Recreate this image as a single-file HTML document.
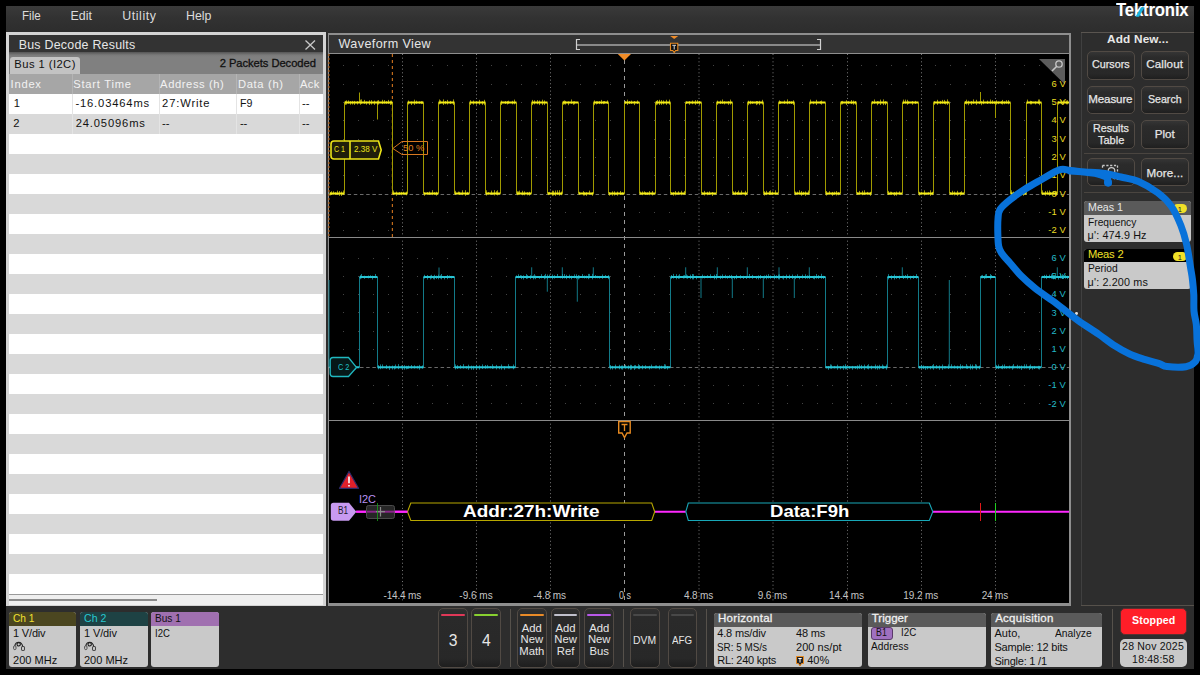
<!DOCTYPE html>
<html><head><meta charset="utf-8"><style>
html,body{margin:0;padding:0;}
body{width:1200px;height:675px;background:#000;position:relative;overflow:hidden;font-family:"Liberation Sans", sans-serif;}
.r{position:absolute;}
.t{position:absolute;white-space:nowrap;}
</style></head><body>
<div class="r" style="left:6px;top:6px;width:1188px;height:663px;background:#2d2d2d;"></div>
<div class="r" style="left:6px;top:6px;width:1188px;height:26px;background:linear-gradient(#3a3a3a,#323232 45%,#2d2d2d);"></div>
<div class="t" style="left:21.60px;top:10.40px;font-size:12.4px;line-height:12.4px;color:#dcdcdc;transform:scaleX(0.937);transform-origin:0 0;">File</div>
<div class="t" style="left:70.60px;top:10.40px;font-size:12.4px;line-height:12.4px;color:#dcdcdc;">Edit</div>
<div class="t" style="left:122.30px;top:10.40px;font-size:12.4px;line-height:12.4px;color:#dcdcdc;letter-spacing:0.55px;">Utility</div>
<div class="t" style="left:186.10px;top:10.40px;font-size:12.4px;line-height:12.4px;color:#dcdcdc;letter-spacing:-0.03px;">Help</div>
<div class="r" style="left:6px;top:32px;width:320px;height:574px;background:#d4d4d4;"></div>
<div class="r" style="left:9px;top:34.5px;width:314px;height:17.5px;background:#333333;"></div>
<div class="t" style="left:18.70px;top:38.70px;font-size:12.4px;line-height:12.4px;color:#e6e6e6;letter-spacing:0.25px;">Bus Decode Results</div>
<svg class="r" style="left:304px;top:39px" width="13" height="12"><path d="M1.5 1.5 L11 10.5 M11 1.5 L1.5 10.5" stroke="#c8c8c8" stroke-width="1.3"/></svg>
<div class="r" style="left:9px;top:52px;width:314px;height:22px;background:linear-gradient(#555,#7a7a7a 3px,#808080 5px,#808080);"></div>
<div class="r" style="left:10px;top:57px;width:70px;height:17px;background:#c3c3c3;border-radius:3px 3px 0 0;"></div>
<div class="t" style="left:14.30px;top:58.72px;font-size:11.2px;line-height:11.2px;color:#111;letter-spacing:0.45px;">Bus 1 (I2C)</div>
<div class="t" style="left:219.70px;top:58.12px;font-size:11.2px;line-height:11.2px;color:#111;letter-spacing:-0.05px;-webkit-text-stroke:0.3px #111;">2 Packets Decoded</div>
<div class="r" style="left:9px;top:74px;width:314px;height:520px;background:#ffffff;"></div>
<div class="r" style="left:9px;top:74px;width:314px;height:20px;background:#a6a6a6;"></div>
<div class="r" style="left:9px;top:114px;width:314px;height:20px;background:#d9d9d9;"></div>
<div class="r" style="left:9px;top:154px;width:314px;height:20px;background:#d9d9d9;"></div>
<div class="r" style="left:9px;top:194px;width:314px;height:20px;background:#d9d9d9;"></div>
<div class="r" style="left:9px;top:234px;width:314px;height:20px;background:#d9d9d9;"></div>
<div class="r" style="left:9px;top:274px;width:314px;height:20px;background:#d9d9d9;"></div>
<div class="r" style="left:9px;top:314px;width:314px;height:20px;background:#d9d9d9;"></div>
<div class="r" style="left:9px;top:354px;width:314px;height:20px;background:#d9d9d9;"></div>
<div class="r" style="left:9px;top:394px;width:314px;height:20px;background:#d9d9d9;"></div>
<div class="r" style="left:9px;top:434px;width:314px;height:20px;background:#d9d9d9;"></div>
<div class="r" style="left:9px;top:474px;width:314px;height:20px;background:#d9d9d9;"></div>
<div class="r" style="left:9px;top:514px;width:314px;height:20px;background:#d9d9d9;"></div>
<div class="r" style="left:9px;top:554px;width:314px;height:20px;background:#d9d9d9;"></div>
<div class="r" style="left:72px;top:74px;width:1px;height:20px;background:#b4b4b4;"></div>
<div class="r" style="left:72px;top:94px;width:1px;height:40px;background:#e4e4e4;"></div>
<div class="r" style="left:159px;top:74px;width:1px;height:20px;background:#b4b4b4;"></div>
<div class="r" style="left:159px;top:94px;width:1px;height:40px;background:#e4e4e4;"></div>
<div class="r" style="left:236px;top:74px;width:1px;height:20px;background:#b4b4b4;"></div>
<div class="r" style="left:236px;top:94px;width:1px;height:40px;background:#e4e4e4;"></div>
<div class="r" style="left:299px;top:74px;width:1px;height:20px;background:#b4b4b4;"></div>
<div class="r" style="left:299px;top:94px;width:1px;height:40px;background:#e4e4e4;"></div>
<div class="t" style="left:10.60px;top:78.52px;font-size:11.2px;line-height:11.2px;color:#f2f2f2;letter-spacing:0.75px;">Index</div>
<div class="t" style="left:73.30px;top:78.52px;font-size:11.2px;line-height:11.2px;color:#f2f2f2;letter-spacing:0.74px;">Start Time</div>
<div class="t" style="left:160.10px;top:78.52px;font-size:11.2px;line-height:11.2px;color:#f2f2f2;letter-spacing:0.59px;">Address (h)</div>
<div class="t" style="left:237.90px;top:78.52px;font-size:11.2px;line-height:11.2px;color:#f2f2f2;letter-spacing:0.67px;">Data (h)</div>
<div class="t" style="left:300.00px;top:78.52px;font-size:11.2px;line-height:11.2px;color:#f2f2f2;letter-spacing:0.4px;">Ack</div>
<div class="t" style="left:13.70px;top:98.22px;font-size:11.2px;line-height:11.2px;color:#111;">1</div>
<div class="t" style="left:75.40px;top:98.22px;font-size:11.2px;line-height:11.2px;color:#111;letter-spacing:0.85px;">-16.03464ms</div>
<div class="t" style="left:162.10px;top:98.22px;font-size:11.2px;line-height:11.2px;color:#111;letter-spacing:0.86px;">27:Write</div>
<div class="t" style="left:239.90px;top:98.22px;font-size:11.2px;line-height:11.2px;color:#111;transform:scaleX(0.950);transform-origin:0 0;">F9</div>
<div class="t" style="left:302.00px;top:98.22px;font-size:11.2px;line-height:11.2px;color:#111;letter-spacing:-0.05px;">--</div>
<div class="t" style="left:13.30px;top:118.22px;font-size:11.2px;line-height:11.2px;color:#111;">2</div>
<div class="t" style="left:75.70px;top:118.22px;font-size:11.2px;line-height:11.2px;color:#111;letter-spacing:0.85px;">24.05096ms</div>
<div class="t" style="left:162.10px;top:118.22px;font-size:11.2px;line-height:11.2px;color:#111;letter-spacing:-0.05px;">--</div>
<div class="t" style="left:239.90px;top:118.22px;font-size:11.2px;line-height:11.2px;color:#111;letter-spacing:-0.05px;">--</div>
<div class="t" style="left:302.00px;top:118.22px;font-size:11.2px;line-height:11.2px;color:#111;letter-spacing:-0.05px;">--</div>
<div class="r" style="left:9px;top:594px;width:314px;height:1px;background:#9a9a9a;"></div>
<div class="r" style="left:9px;top:595px;width:314px;height:9.5px;background:#efefef;"></div>
<div class="r" style="left:9px;top:598.5px;width:148px;height:2.5px;background:#8a8a8a;"></div>
<div class="r" style="left:327.5px;top:33px;width:743.5px;height:572.5px;background:#8e8e8e;"></div>
<div class="r" style="left:329px;top:35px;width:740px;height:18px;background:#333333;"></div>
<div class="t" style="left:338.50px;top:38.43px;font-size:12.6px;line-height:12.6px;color:#e6e6e6;letter-spacing:0.39px;">Waveform View</div>
<div class="r" style="left:329px;top:54px;width:740px;height:549px;background:#000000;"></div>
<svg class="r" style="left:0;top:0" width="1200" height="675"><path d="M343.3 65.9h1 M358.1 65.9h1 M372.9 65.9h1 M387.7 65.9h1 M417.3 65.9h1 M432.1 65.9h1 M446.9 65.9h1 M461.7 65.9h1 M491.3 65.9h1 M506.1 65.9h1 M520.9 65.9h1 M535.7 65.9h1 M565.3 65.9h1 M580.1 65.9h1 M594.9 65.9h1 M609.7 65.9h1 M639.3 65.9h1 M654.1 65.9h1 M668.9 65.9h1 M683.7 65.9h1 M713.3 65.9h1 M728.1 65.9h1 M742.9 65.9h1 M757.7 65.9h1 M787.3 65.9h1 M802.1 65.9h1 M816.9 65.9h1 M831.7 65.9h1 M861.3 65.9h1 M876.1 65.9h1 M890.9 65.9h1 M905.7 65.9h1 M935.3 65.9h1 M950.1 65.9h1 M964.9 65.9h1 M979.7 65.9h1 M1009.3 65.9h1 M1024.1 65.9h1 M1038.9 65.9h1 M1053.7 65.9h1 M343.3 84.2h1 M358.1 84.2h1 M372.9 84.2h1 M387.7 84.2h1 M417.3 84.2h1 M432.1 84.2h1 M446.9 84.2h1 M461.7 84.2h1 M491.3 84.2h1 M506.1 84.2h1 M520.9 84.2h1 M535.7 84.2h1 M565.3 84.2h1 M580.1 84.2h1 M594.9 84.2h1 M609.7 84.2h1 M639.3 84.2h1 M654.1 84.2h1 M668.9 84.2h1 M683.7 84.2h1 M713.3 84.2h1 M728.1 84.2h1 M742.9 84.2h1 M757.7 84.2h1 M787.3 84.2h1 M802.1 84.2h1 M816.9 84.2h1 M831.7 84.2h1 M861.3 84.2h1 M876.1 84.2h1 M890.9 84.2h1 M905.7 84.2h1 M935.3 84.2h1 M950.1 84.2h1 M964.9 84.2h1 M979.7 84.2h1 M1009.3 84.2h1 M1024.1 84.2h1 M1038.9 84.2h1 M1053.7 84.2h1 M343.3 102.5h1 M358.1 102.5h1 M372.9 102.5h1 M387.7 102.5h1 M417.3 102.5h1 M432.1 102.5h1 M446.9 102.5h1 M461.7 102.5h1 M491.3 102.5h1 M506.1 102.5h1 M520.9 102.5h1 M535.7 102.5h1 M565.3 102.5h1 M580.1 102.5h1 M594.9 102.5h1 M609.7 102.5h1 M639.3 102.5h1 M654.1 102.5h1 M668.9 102.5h1 M683.7 102.5h1 M713.3 102.5h1 M728.1 102.5h1 M742.9 102.5h1 M757.7 102.5h1 M787.3 102.5h1 M802.1 102.5h1 M816.9 102.5h1 M831.7 102.5h1 M861.3 102.5h1 M876.1 102.5h1 M890.9 102.5h1 M905.7 102.5h1 M935.3 102.5h1 M950.1 102.5h1 M964.9 102.5h1 M979.7 102.5h1 M1009.3 102.5h1 M1024.1 102.5h1 M1038.9 102.5h1 M1053.7 102.5h1 M343.3 120.8h1 M358.1 120.8h1 M372.9 120.8h1 M387.7 120.8h1 M417.3 120.8h1 M432.1 120.8h1 M446.9 120.8h1 M461.7 120.8h1 M491.3 120.8h1 M506.1 120.8h1 M520.9 120.8h1 M535.7 120.8h1 M565.3 120.8h1 M580.1 120.8h1 M594.9 120.8h1 M609.7 120.8h1 M639.3 120.8h1 M654.1 120.8h1 M668.9 120.8h1 M683.7 120.8h1 M713.3 120.8h1 M728.1 120.8h1 M742.9 120.8h1 M757.7 120.8h1 M787.3 120.8h1 M802.1 120.8h1 M816.9 120.8h1 M831.7 120.8h1 M861.3 120.8h1 M876.1 120.8h1 M890.9 120.8h1 M905.7 120.8h1 M935.3 120.8h1 M950.1 120.8h1 M964.9 120.8h1 M979.7 120.8h1 M1009.3 120.8h1 M1024.1 120.8h1 M1038.9 120.8h1 M1053.7 120.8h1 M343.3 139.1h1 M358.1 139.1h1 M372.9 139.1h1 M387.7 139.1h1 M417.3 139.1h1 M432.1 139.1h1 M446.9 139.1h1 M461.7 139.1h1 M491.3 139.1h1 M506.1 139.1h1 M520.9 139.1h1 M535.7 139.1h1 M565.3 139.1h1 M580.1 139.1h1 M594.9 139.1h1 M609.7 139.1h1 M639.3 139.1h1 M654.1 139.1h1 M668.9 139.1h1 M683.7 139.1h1 M713.3 139.1h1 M728.1 139.1h1 M742.9 139.1h1 M757.7 139.1h1 M787.3 139.1h1 M802.1 139.1h1 M816.9 139.1h1 M831.7 139.1h1 M861.3 139.1h1 M876.1 139.1h1 M890.9 139.1h1 M905.7 139.1h1 M935.3 139.1h1 M950.1 139.1h1 M964.9 139.1h1 M979.7 139.1h1 M1009.3 139.1h1 M1024.1 139.1h1 M1038.9 139.1h1 M1053.7 139.1h1 M343.3 157.4h1 M358.1 157.4h1 M372.9 157.4h1 M387.7 157.4h1 M417.3 157.4h1 M432.1 157.4h1 M446.9 157.4h1 M461.7 157.4h1 M491.3 157.4h1 M506.1 157.4h1 M520.9 157.4h1 M535.7 157.4h1 M565.3 157.4h1 M580.1 157.4h1 M594.9 157.4h1 M609.7 157.4h1 M639.3 157.4h1 M654.1 157.4h1 M668.9 157.4h1 M683.7 157.4h1 M713.3 157.4h1 M728.1 157.4h1 M742.9 157.4h1 M757.7 157.4h1 M787.3 157.4h1 M802.1 157.4h1 M816.9 157.4h1 M831.7 157.4h1 M861.3 157.4h1 M876.1 157.4h1 M890.9 157.4h1 M905.7 157.4h1 M935.3 157.4h1 M950.1 157.4h1 M964.9 157.4h1 M979.7 157.4h1 M1009.3 157.4h1 M1024.1 157.4h1 M1038.9 157.4h1 M1053.7 157.4h1 M343.3 175.7h1 M358.1 175.7h1 M372.9 175.7h1 M387.7 175.7h1 M417.3 175.7h1 M432.1 175.7h1 M446.9 175.7h1 M461.7 175.7h1 M491.3 175.7h1 M506.1 175.7h1 M520.9 175.7h1 M535.7 175.7h1 M565.3 175.7h1 M580.1 175.7h1 M594.9 175.7h1 M609.7 175.7h1 M639.3 175.7h1 M654.1 175.7h1 M668.9 175.7h1 M683.7 175.7h1 M713.3 175.7h1 M728.1 175.7h1 M742.9 175.7h1 M757.7 175.7h1 M787.3 175.7h1 M802.1 175.7h1 M816.9 175.7h1 M831.7 175.7h1 M861.3 175.7h1 M876.1 175.7h1 M890.9 175.7h1 M905.7 175.7h1 M935.3 175.7h1 M950.1 175.7h1 M964.9 175.7h1 M979.7 175.7h1 M1009.3 175.7h1 M1024.1 175.7h1 M1038.9 175.7h1 M1053.7 175.7h1 M343.3 212.3h1 M358.1 212.3h1 M372.9 212.3h1 M387.7 212.3h1 M417.3 212.3h1 M432.1 212.3h1 M446.9 212.3h1 M461.7 212.3h1 M491.3 212.3h1 M506.1 212.3h1 M520.9 212.3h1 M535.7 212.3h1 M565.3 212.3h1 M580.1 212.3h1 M594.9 212.3h1 M609.7 212.3h1 M639.3 212.3h1 M654.1 212.3h1 M668.9 212.3h1 M683.7 212.3h1 M713.3 212.3h1 M728.1 212.3h1 M742.9 212.3h1 M757.7 212.3h1 M787.3 212.3h1 M802.1 212.3h1 M816.9 212.3h1 M831.7 212.3h1 M861.3 212.3h1 M876.1 212.3h1 M890.9 212.3h1 M905.7 212.3h1 M935.3 212.3h1 M950.1 212.3h1 M964.9 212.3h1 M979.7 212.3h1 M1009.3 212.3h1 M1024.1 212.3h1 M1038.9 212.3h1 M1053.7 212.3h1 M343.3 230.6h1 M358.1 230.6h1 M372.9 230.6h1 M387.7 230.6h1 M417.3 230.6h1 M432.1 230.6h1 M446.9 230.6h1 M461.7 230.6h1 M491.3 230.6h1 M506.1 230.6h1 M520.9 230.6h1 M535.7 230.6h1 M565.3 230.6h1 M580.1 230.6h1 M594.9 230.6h1 M609.7 230.6h1 M639.3 230.6h1 M654.1 230.6h1 M668.9 230.6h1 M683.7 230.6h1 M713.3 230.6h1 M728.1 230.6h1 M742.9 230.6h1 M757.7 230.6h1 M787.3 230.6h1 M802.1 230.6h1 M816.9 230.6h1 M831.7 230.6h1 M861.3 230.6h1 M876.1 230.6h1 M890.9 230.6h1 M905.7 230.6h1 M935.3 230.6h1 M950.1 230.6h1 M964.9 230.6h1 M979.7 230.6h1 M1009.3 230.6h1 M1024.1 230.6h1 M1038.9 230.6h1 M1053.7 230.6h1 M343.3 258.3h1 M358.1 258.3h1 M372.9 258.3h1 M387.7 258.3h1 M417.3 258.3h1 M432.1 258.3h1 M446.9 258.3h1 M461.7 258.3h1 M491.3 258.3h1 M506.1 258.3h1 M520.9 258.3h1 M535.7 258.3h1 M565.3 258.3h1 M580.1 258.3h1 M594.9 258.3h1 M609.7 258.3h1 M639.3 258.3h1 M654.1 258.3h1 M668.9 258.3h1 M683.7 258.3h1 M713.3 258.3h1 M728.1 258.3h1 M742.9 258.3h1 M757.7 258.3h1 M787.3 258.3h1 M802.1 258.3h1 M816.9 258.3h1 M831.7 258.3h1 M861.3 258.3h1 M876.1 258.3h1 M890.9 258.3h1 M905.7 258.3h1 M935.3 258.3h1 M950.1 258.3h1 M964.9 258.3h1 M979.7 258.3h1 M1009.3 258.3h1 M1024.1 258.3h1 M1038.9 258.3h1 M1053.7 258.3h1 M343.3 276.5h1 M358.1 276.5h1 M372.9 276.5h1 M387.7 276.5h1 M417.3 276.5h1 M432.1 276.5h1 M446.9 276.5h1 M461.7 276.5h1 M491.3 276.5h1 M506.1 276.5h1 M520.9 276.5h1 M535.7 276.5h1 M565.3 276.5h1 M580.1 276.5h1 M594.9 276.5h1 M609.7 276.5h1 M639.3 276.5h1 M654.1 276.5h1 M668.9 276.5h1 M683.7 276.5h1 M713.3 276.5h1 M728.1 276.5h1 M742.9 276.5h1 M757.7 276.5h1 M787.3 276.5h1 M802.1 276.5h1 M816.9 276.5h1 M831.7 276.5h1 M861.3 276.5h1 M876.1 276.5h1 M890.9 276.5h1 M905.7 276.5h1 M935.3 276.5h1 M950.1 276.5h1 M964.9 276.5h1 M979.7 276.5h1 M1009.3 276.5h1 M1024.1 276.5h1 M1038.9 276.5h1 M1053.7 276.5h1 M343.3 294.7h1 M358.1 294.7h1 M372.9 294.7h1 M387.7 294.7h1 M417.3 294.7h1 M432.1 294.7h1 M446.9 294.7h1 M461.7 294.7h1 M491.3 294.7h1 M506.1 294.7h1 M520.9 294.7h1 M535.7 294.7h1 M565.3 294.7h1 M580.1 294.7h1 M594.9 294.7h1 M609.7 294.7h1 M639.3 294.7h1 M654.1 294.7h1 M668.9 294.7h1 M683.7 294.7h1 M713.3 294.7h1 M728.1 294.7h1 M742.9 294.7h1 M757.7 294.7h1 M787.3 294.7h1 M802.1 294.7h1 M816.9 294.7h1 M831.7 294.7h1 M861.3 294.7h1 M876.1 294.7h1 M890.9 294.7h1 M905.7 294.7h1 M935.3 294.7h1 M950.1 294.7h1 M964.9 294.7h1 M979.7 294.7h1 M1009.3 294.7h1 M1024.1 294.7h1 M1038.9 294.7h1 M1053.7 294.7h1 M343.3 312.9h1 M358.1 312.9h1 M372.9 312.9h1 M387.7 312.9h1 M417.3 312.9h1 M432.1 312.9h1 M446.9 312.9h1 M461.7 312.9h1 M491.3 312.9h1 M506.1 312.9h1 M520.9 312.9h1 M535.7 312.9h1 M565.3 312.9h1 M580.1 312.9h1 M594.9 312.9h1 M609.7 312.9h1 M639.3 312.9h1 M654.1 312.9h1 M668.9 312.9h1 M683.7 312.9h1 M713.3 312.9h1 M728.1 312.9h1 M742.9 312.9h1 M757.7 312.9h1 M787.3 312.9h1 M802.1 312.9h1 M816.9 312.9h1 M831.7 312.9h1 M861.3 312.9h1 M876.1 312.9h1 M890.9 312.9h1 M905.7 312.9h1 M935.3 312.9h1 M950.1 312.9h1 M964.9 312.9h1 M979.7 312.9h1 M1009.3 312.9h1 M1024.1 312.9h1 M1038.9 312.9h1 M1053.7 312.9h1 M343.3 331.1h1 M358.1 331.1h1 M372.9 331.1h1 M387.7 331.1h1 M417.3 331.1h1 M432.1 331.1h1 M446.9 331.1h1 M461.7 331.1h1 M491.3 331.1h1 M506.1 331.1h1 M520.9 331.1h1 M535.7 331.1h1 M565.3 331.1h1 M580.1 331.1h1 M594.9 331.1h1 M609.7 331.1h1 M639.3 331.1h1 M654.1 331.1h1 M668.9 331.1h1 M683.7 331.1h1 M713.3 331.1h1 M728.1 331.1h1 M742.9 331.1h1 M757.7 331.1h1 M787.3 331.1h1 M802.1 331.1h1 M816.9 331.1h1 M831.7 331.1h1 M861.3 331.1h1 M876.1 331.1h1 M890.9 331.1h1 M905.7 331.1h1 M935.3 331.1h1 M950.1 331.1h1 M964.9 331.1h1 M979.7 331.1h1 M1009.3 331.1h1 M1024.1 331.1h1 M1038.9 331.1h1 M1053.7 331.1h1 M343.3 349.3h1 M358.1 349.3h1 M372.9 349.3h1 M387.7 349.3h1 M417.3 349.3h1 M432.1 349.3h1 M446.9 349.3h1 M461.7 349.3h1 M491.3 349.3h1 M506.1 349.3h1 M520.9 349.3h1 M535.7 349.3h1 M565.3 349.3h1 M580.1 349.3h1 M594.9 349.3h1 M609.7 349.3h1 M639.3 349.3h1 M654.1 349.3h1 M668.9 349.3h1 M683.7 349.3h1 M713.3 349.3h1 M728.1 349.3h1 M742.9 349.3h1 M757.7 349.3h1 M787.3 349.3h1 M802.1 349.3h1 M816.9 349.3h1 M831.7 349.3h1 M861.3 349.3h1 M876.1 349.3h1 M890.9 349.3h1 M905.7 349.3h1 M935.3 349.3h1 M950.1 349.3h1 M964.9 349.3h1 M979.7 349.3h1 M1009.3 349.3h1 M1024.1 349.3h1 M1038.9 349.3h1 M1053.7 349.3h1 M343.3 385.7h1 M358.1 385.7h1 M372.9 385.7h1 M387.7 385.7h1 M417.3 385.7h1 M432.1 385.7h1 M446.9 385.7h1 M461.7 385.7h1 M491.3 385.7h1 M506.1 385.7h1 M520.9 385.7h1 M535.7 385.7h1 M565.3 385.7h1 M580.1 385.7h1 M594.9 385.7h1 M609.7 385.7h1 M639.3 385.7h1 M654.1 385.7h1 M668.9 385.7h1 M683.7 385.7h1 M713.3 385.7h1 M728.1 385.7h1 M742.9 385.7h1 M757.7 385.7h1 M787.3 385.7h1 M802.1 385.7h1 M816.9 385.7h1 M831.7 385.7h1 M861.3 385.7h1 M876.1 385.7h1 M890.9 385.7h1 M905.7 385.7h1 M935.3 385.7h1 M950.1 385.7h1 M964.9 385.7h1 M979.7 385.7h1 M1009.3 385.7h1 M1024.1 385.7h1 M1038.9 385.7h1 M1053.7 385.7h1 M343.3 403.9h1 M358.1 403.9h1 M372.9 403.9h1 M387.7 403.9h1 M417.3 403.9h1 M432.1 403.9h1 M446.9 403.9h1 M461.7 403.9h1 M491.3 403.9h1 M506.1 403.9h1 M520.9 403.9h1 M535.7 403.9h1 M565.3 403.9h1 M580.1 403.9h1 M594.9 403.9h1 M609.7 403.9h1 M639.3 403.9h1 M654.1 403.9h1 M668.9 403.9h1 M683.7 403.9h1 M713.3 403.9h1 M728.1 403.9h1 M742.9 403.9h1 M757.7 403.9h1 M787.3 403.9h1 M802.1 403.9h1 M816.9 403.9h1 M831.7 403.9h1 M861.3 403.9h1 M876.1 403.9h1 M890.9 403.9h1 M905.7 403.9h1 M935.3 403.9h1 M950.1 403.9h1 M964.9 403.9h1 M979.7 403.9h1 M1009.3 403.9h1 M1024.1 403.9h1 M1038.9 403.9h1 M1053.7 403.9h1" stroke="#444" stroke-width="1" shape-rendering="crispEdges"/><line x1="402.5" y1="54" x2="402.5" y2="603" stroke="#7a7a7a" stroke-width="1" stroke-dasharray="1 2.66"/><line x1="476.5" y1="54" x2="476.5" y2="603" stroke="#7a7a7a" stroke-width="1" stroke-dasharray="1 2.66"/><line x1="550.5" y1="54" x2="550.5" y2="603" stroke="#7a7a7a" stroke-width="1" stroke-dasharray="1 2.66"/><line x1="699" y1="54" x2="699" y2="603" stroke="#7a7a7a" stroke-width="1" stroke-dasharray="1 2.66"/><line x1="773" y1="54" x2="773" y2="603" stroke="#7a7a7a" stroke-width="1" stroke-dasharray="1 2.66"/><line x1="847.5" y1="54" x2="847.5" y2="603" stroke="#7a7a7a" stroke-width="1" stroke-dasharray="1 2.66"/><line x1="921.5" y1="54" x2="921.5" y2="603" stroke="#7a7a7a" stroke-width="1" stroke-dasharray="1 2.66"/><line x1="995.5" y1="54" x2="995.5" y2="603" stroke="#7a7a7a" stroke-width="1" stroke-dasharray="1 2.66"/><line x1="624.5" y1="60" x2="624.5" y2="603" stroke="#9a9a9a" stroke-width="1" stroke-dasharray="4 4"/><line x1="329" y1="194.5" x2="1069" y2="194.5" stroke="#6a6a6a" stroke-width="1" stroke-dasharray="3.5 2.7"/><line x1="329" y1="367.5" x2="1069" y2="367.5" stroke="#6a6a6a" stroke-width="1" stroke-dasharray="3.5 2.7"/><path d="M329 237.5H1069M329 420.5H1069" stroke="#8a8a8a" stroke-width="1.2"/><line x1="392.4" y1="54" x2="392.4" y2="237" stroke="#c06a1a" stroke-width="1.2" stroke-dasharray="3 3"/><line x1="328.9" y1="54" x2="328.9" y2="237" stroke="#b0601a" stroke-width="1.2" stroke-dasharray="2 2"/><path d="M344.5 102.6V193.4M392.5 102.6V193.4M407.5 102.6V193.4M423.5 102.6V193.4M438.5 102.6V193.4M454.5 102.6V193.4M469.5 102.6V193.4M485.5 102.6V193.4M500.5 102.6V193.4M516.5 102.6V193.4M531.5 102.6V193.4M547.5 102.6V193.4M562.5 102.6V193.4M578.5 102.6V193.4M593.5 102.6V193.4M608.5 102.6V193.4M624.5 102.6V193.4M639.5 102.6V193.4M655.5 102.6V193.4M670.5 102.6V193.4M685.5 102.6V193.4M701.5 102.6V193.4M716.5 102.6V193.4M732.5 102.6V193.4M747.5 102.6V193.4M763.5 102.6V193.4M778.5 102.6V193.4M794.5 102.6V193.4M809.5 102.6V193.4M825.5 102.6V193.4M840.5 102.6V193.4M856.5 102.6V193.4M871.5 102.6V193.4M887.5 102.6V193.4M902.5 102.6V193.4M918.5 102.6V193.4M933.5 102.6V193.4M949.5 102.6V193.4M964.5 102.6V193.4M1010.5 102.6V193.4M1026.5 102.6V193.4M1041.5 102.6V193.4M1057.5 102.6V193.4M359.5 102.5V92.5M377.5 102.5V119.5M980.5 102.5V92M995.5 102.5V118" stroke="#a09a00" stroke-width="1.0" fill="none" /><path d="M330.5 192.1V195.4M331.5 191.2V195.0M333.5 191.3V194.5M335.5 192.2V194.5M337.5 190.6V194.6M339.5 191.0V195.9M341.5 191.5V196.0M343.5 190.5V194.9M345.5 100.9V104.9M346.5 100.3V104.6M348.5 100.4V103.7M350.5 101.1V104.7M352.5 100.9V104.5M354.5 100.9V104.9M357.5 101.1V104.5M360.5 99.7V104.8M361.5 99.4V103.8M364.5 99.9V103.8M366.5 101.5V104.7M369.5 100.3V105.0M371.5 100.1V104.6M374.5 100.6V104.9M377.5 100.6V104.7M378.5 100.1V104.6M382.5 99.8V104.1M384.5 100.1V103.6M386.5 101.2V103.8M388.5 99.9V103.8M390.5 100.7V105.0M391.5 100.6V104.5M393.5 190.5V194.8M396.5 191.6V195.8M399.5 192.1V194.7M401.5 191.9V195.2M403.5 191.8V194.4M406.5 191.6V195.3M408.5 100.5V104.6M411.5 101.5V105.0M414.5 99.7V104.9M416.5 100.7V103.8M419.5 101.5V103.7M421.5 101.2V104.1M422.5 101.6V103.8M424.5 192.3V195.8M427.5 192.1V194.8M429.5 191.6V194.6M432.5 190.2V195.1M434.5 192.2V194.6M436.5 191.8V195.7M439.5 99.5V104.4M440.5 100.4V103.6M443.5 99.4V105.0M445.5 101.0V104.2M447.5 99.9V104.5M450.5 100.9V104.0M453.5 99.4V105.0M455.5 190.8V194.8M458.5 191.6V194.4M459.5 191.8V194.8M462.5 190.3V195.1M465.5 190.2V195.9M467.5 191.9V194.8M470.5 100.2V105.0M473.5 100.5V104.6M476.5 101.4V104.7M479.5 99.9V104.8M482.5 101.2V104.9M484.5 99.8V105.2M486.5 190.3V195.6M488.5 192.1V194.6M491.5 190.6V194.6M494.5 190.2V195.5M496.5 191.2V194.6M497.5 190.3V195.4M501.5 100.6V105.0M505.5 101.1V104.0M507.5 101.1V104.5M508.5 100.7V103.8M512.5 100.8V104.3M514.5 99.6V104.3M517.5 191.2V195.2M518.5 191.4V194.7M519.5 190.6V194.7M522.5 190.8V195.3M524.5 191.3V195.3M527.5 192.2V195.3M529.5 191.8V195.6M532.5 99.9V105.1M534.5 100.3V104.4M537.5 100.1V104.3M539.5 100.5V105.1M542.5 99.7V105.1M544.5 100.4V105.1M548.5 192.1V195.1M549.5 191.9V194.5M552.5 190.7V195.8M553.5 190.8V195.5M555.5 190.5V195.9M557.5 190.3V195.0M559.5 190.2V195.7M561.5 191.5V195.2M563.5 100.9V104.8M564.5 100.4V104.3M565.5 100.9V104.6M568.5 101.5V105.2M571.5 99.5V103.8M573.5 101.5V104.8M574.5 101.3V104.3M579.5 191.8V194.6M583.5 191.1V195.5M584.5 192.3V195.5M586.5 192.2V195.9M589.5 190.6V194.5M592.5 192.3V195.8M594.5 100.4V105.1M596.5 101.3V104.4M597.5 101.4V103.9M599.5 101.2V104.1M601.5 99.9V104.1M603.5 101.2V104.2M604.5 101.0V103.6M607.5 100.4V103.9M609.5 192.2V195.7M612.5 191.3V195.7M614.5 191.3V195.5M617.5 191.6V195.7M620.5 191.0V195.0M622.5 192.3V194.6M625.5 101.0V103.9M627.5 99.7V105.0M629.5 101.0V104.0M631.5 100.6V103.9M634.5 101.0V105.1M637.5 100.4V104.0M640.5 191.6V194.4M642.5 191.4V195.2M644.5 191.3V194.4M645.5 192.2V195.0M647.5 192.4V194.9M649.5 191.1V195.2M652.5 191.0V195.5M656.5 100.9V105.2M657.5 100.0V104.6M659.5 99.8V105.0M661.5 100.0V104.9M663.5 100.4V104.4M666.5 99.8V104.9M669.5 99.6V104.7M671.5 192.3V194.6M673.5 192.2V195.7M675.5 191.0V195.4M678.5 191.3V194.4M681.5 190.8V195.2M684.5 190.9V194.5M686.5 101.4V104.0M689.5 101.1V104.8M692.5 100.5V104.2M695.5 100.1V104.8M697.5 100.2V103.7M699.5 101.0V104.8M702.5 192.4V194.5M704.5 190.9V195.5M707.5 191.8V195.2M709.5 191.4V194.6M712.5 192.0V196.0M717.5 100.6V104.9M720.5 100.6V104.0M722.5 99.5V103.9M724.5 101.3V104.4M728.5 101.3V104.9M730.5 99.6V104.7M733.5 191.3V194.4M735.5 191.3V195.1M737.5 192.1V195.0M738.5 190.6V194.4M741.5 190.6V194.6M745.5 190.8V195.8M748.5 100.7V105.2M750.5 100.8V104.3M752.5 101.5V103.8M756.5 101.0V105.1M757.5 101.0V104.4M759.5 100.8V105.1M762.5 99.8V104.6M764.5 191.2V195.6M766.5 190.8V195.1M769.5 191.0V194.9M770.5 190.4V194.6M772.5 191.6V194.9M775.5 190.3V194.8M779.5 100.4V104.2M780.5 101.2V103.9M784.5 100.5V104.0M787.5 99.4V104.3M789.5 101.2V103.7M791.5 101.4V104.0M793.5 100.3V105.0M795.5 191.5V195.2M797.5 191.7V194.5M799.5 190.3V194.6M801.5 191.0V195.8M803.5 191.8V194.8M805.5 191.4V195.9M808.5 190.5V194.4M810.5 99.6V104.4M813.5 101.6V104.2M816.5 99.8V105.0M820.5 101.1V103.8M821.5 100.5V104.7M826.5 191.0V195.6M829.5 191.2V194.5M832.5 191.9V195.9M834.5 191.7V194.6M836.5 191.0V195.5M838.5 192.2V195.2M841.5 101.1V104.6M842.5 100.9V104.3M846.5 100.2V105.0M848.5 101.1V104.0M851.5 100.0V104.1M853.5 100.5V104.7M855.5 101.0V104.7M857.5 192.3V194.9M859.5 190.9V194.7M862.5 190.8V195.2M864.5 190.3V194.9M867.5 191.9V194.8M870.5 191.8V195.9M872.5 101.1V104.3M874.5 99.5V103.8M877.5 101.1V105.2M878.5 101.5V103.7M880.5 99.6V105.0M883.5 99.4V105.1M885.5 101.2V105.1M888.5 190.9V195.0M890.5 191.7V194.7M891.5 191.8V195.0M894.5 192.1V195.9M896.5 191.6V195.7M899.5 191.4V194.5M903.5 99.6V103.9M905.5 99.6V103.6M907.5 99.8V104.8M908.5 101.5V103.7M912.5 101.0V104.8M915.5 100.9V104.0M919.5 191.8V195.5M921.5 191.8V194.4M924.5 190.4V195.4M928.5 192.3V194.8M930.5 190.3V195.9M932.5 191.8V195.1M934.5 101.2V104.9M937.5 99.8V104.8M940.5 100.9V104.1M942.5 99.9V103.7M944.5 99.9V104.0M945.5 101.5V104.5M947.5 99.4V105.0M950.5 192.2V194.6M952.5 190.8V195.1M954.5 191.5V195.4M957.5 190.8V195.8M960.5 192.1V195.7M961.5 191.2V195.0M965.5 101.1V104.0M966.5 99.7V104.5M968.5 100.7V105.2M971.5 101.1V104.9M973.5 99.4V103.8M976.5 99.8V104.9M979.5 101.5V104.1M981.5 101.2V105.2M983.5 99.6V104.2M987.5 100.6V104.0M990.5 99.5V103.8M992.5 100.2V103.9M994.5 101.3V103.9M996.5 100.3V104.6M998.5 101.6V104.1M1001.5 101.2V104.1M1002.5 99.9V104.5M1004.5 101.4V104.2M1006.5 100.2V103.7M1008.5 100.1V104.3M1011.5 190.3V194.9M1013.5 191.6V195.1M1017.5 190.2V195.0M1018.5 190.8V194.7M1020.5 190.4V195.1M1023.5 191.5V195.8M1025.5 192.0V194.4M1027.5 99.6V103.7M1030.5 100.8V104.4M1031.5 101.0V104.4M1035.5 101.4V104.4M1038.5 99.5V103.9M1039.5 99.5V105.2M1042.5 190.4V195.0M1045.5 191.0V195.7M1047.5 190.7V194.8M1049.5 190.5V195.7M1050.5 191.9V195.0M1053.5 191.6V194.6M1055.5 190.8V195.8M1056.5 191.2V195.6M1058.5 101.3V104.6M1061.5 100.2V104.1M1063.5 100.3V104.3M1066.5 100.6V104.3M1067.5 100.2V104.4" stroke="#d8d010" stroke-width="0.7" fill="none" /><path d="M329.5 193.4H344.5M344.5 102.6H392.5M392.5 193.4H407.5M407.5 102.6H423.5M423.5 193.4H438.5M438.5 102.6H454.5M454.5 193.4H469.5M469.5 102.6H485.5M485.5 193.4H500.5M500.5 102.6H516.5M516.5 193.4H531.5M531.5 102.6H547.5M547.5 193.4H562.5M562.5 102.6H578.5M578.5 193.4H593.5M593.5 102.6H608.5M608.5 193.4H624.5M624.5 102.6H639.5M639.5 193.4H655.5M655.5 102.6H670.5M670.5 193.4H685.5M685.5 102.6H701.5M701.5 193.4H716.5M716.5 102.6H732.5M732.5 193.4H747.5M747.5 102.6H763.5M763.5 193.4H778.5M778.5 102.6H794.5M794.5 193.4H809.5M809.5 102.6H825.5M825.5 193.4H840.5M840.5 102.6H856.5M856.5 193.4H871.5M871.5 102.6H887.5M887.5 193.4H902.5M902.5 102.6H918.5M918.5 193.4H933.5M933.5 102.6H949.5M949.5 193.4H964.5M964.5 102.6H1010.5M1010.5 193.4H1026.5M1026.5 102.6H1041.5M1041.5 193.4H1057.5M1057.5 102.6H1069.5" stroke="#f4ec18" stroke-width="2.0" fill="none" /><path d="M359.5 277.0V367.3M377.5 277.0V367.3M423.5 277.0V367.3M454.5 277.0V367.3M515.5 277.0V367.3M609.5 277.0V367.3M670.5 277.0V367.3M825.5 277.0V367.3M887.5 277.0V367.3M918.5 277.0V367.3M980.5 277.0V367.3M995.5 277.0V367.3M1041.5 277.0V367.3M329 280V367M949.3 366.7V280M439 276.7V267.5M531.7 276.7V267.3M562.3 276.7V267.3M593.3 276.7V267.3M547.3 276.7V291.7M577.3 276.7V301.7M685.7 276.7V267.3M717.3 276.7V267.3M747.3 276.7V267.3M779 276.7V267.3M809.3 276.7V267.3M902.3 276.7V267.3M1057.3 276.7V267.3M701 276.7V298M732.3 276.7V298M763.3 276.7V298M794.3 276.7V298" stroke="#127a88" stroke-width="1.0" fill="none" /><path d="M330.5 364.6V369.0M332.5 365.3V368.5M333.5 365.4V368.4M336.5 365.2V368.4M338.5 366.1V369.5M341.5 365.2V368.4M344.5 365.5V369.8M345.5 364.4V369.9M348.5 364.5V368.6M352.5 365.2V369.8M355.5 365.9V369.6M360.5 275.2V279.2M361.5 274.0V278.4M364.5 275.7V278.8M368.5 275.5V278.4M370.5 275.3V278.1M372.5 275.6V279.5M375.5 274.0V278.3M378.5 365.1V369.3M380.5 364.4V369.2M382.5 364.4V368.5M386.5 364.9V368.9M389.5 365.7V369.9M392.5 365.5V369.5M394.5 365.9V369.5M395.5 364.5V368.7M398.5 364.1V369.2M401.5 365.6V368.3M402.5 366.0V369.3M404.5 365.2V369.7M406.5 365.8V369.3M407.5 366.3V368.9M408.5 365.5V368.7M411.5 365.0V368.6M414.5 365.3V368.5M417.5 365.8V368.5M419.5 364.9V369.7M422.5 365.4V368.7M424.5 274.8V278.6M427.5 275.0V279.5M430.5 275.5V279.4M431.5 274.8V278.6M433.5 275.9V279.2M434.5 274.8V279.5M436.5 275.6V279.0M438.5 274.6V279.3M440.5 275.3V278.5M441.5 274.0V279.3M444.5 276.0V279.4M447.5 275.0V279.2M449.5 275.5V278.2M451.5 275.9V278.5M455.5 364.4V369.4M457.5 365.1V369.0M460.5 365.1V368.7M463.5 364.2V368.6M466.5 366.3V368.7M468.5 364.7V369.8M471.5 365.6V369.7M473.5 365.8V369.8M476.5 364.8V369.4M479.5 365.3V369.6M482.5 364.4V369.0M485.5 365.0V368.8M487.5 364.9V368.4M490.5 366.0V368.3M492.5 364.3V368.9M493.5 366.2V368.4M496.5 364.9V369.4M499.5 366.2V369.2M501.5 364.5V369.6M504.5 366.2V369.7M508.5 364.2V368.5M509.5 366.1V368.4M513.5 364.5V369.3M516.5 275.4V278.2M518.5 274.3V278.3M520.5 275.1V278.0M521.5 275.4V279.1M523.5 275.3V279.5M526.5 274.1V279.0M527.5 275.1V278.7M530.5 275.2V279.1M533.5 275.5V279.4M534.5 274.2V278.3M535.5 275.6V279.2M539.5 276.0V278.8M541.5 274.2V278.3M544.5 275.2V279.3M545.5 273.9V278.5M547.5 274.5V278.8M549.5 274.6V278.1M552.5 274.5V279.3M554.5 275.2V278.6M557.5 274.0V278.1M560.5 275.9V278.3M562.5 274.0V278.8M564.5 274.1V278.4M566.5 274.8V279.2M569.5 274.6V278.6M571.5 275.7V279.3M574.5 274.4V278.3M576.5 274.3V278.9M578.5 275.0V279.4M579.5 275.6V278.5M582.5 274.1V278.2M584.5 275.5V278.5M586.5 275.6V278.5M588.5 273.9V279.2M589.5 273.9V278.2M592.5 273.8V279.3M595.5 275.0V278.3M597.5 275.8V278.3M599.5 275.9V278.6M602.5 274.5V278.8M605.5 275.0V278.2M608.5 275.1V279.2M610.5 365.0V369.5M612.5 365.8V369.5M615.5 364.6V369.4M619.5 364.8V369.3M621.5 365.6V369.3M622.5 365.4V369.6M625.5 364.9V368.7M628.5 365.3V369.3M630.5 364.8V369.8M631.5 364.9V369.5M634.5 365.2V369.9M635.5 365.1V368.6M638.5 364.2V369.1M639.5 365.0V369.2M642.5 365.2V369.3M645.5 365.2V369.0M649.5 365.8V369.4M651.5 364.6V368.5M655.5 365.5V368.4M656.5 365.4V368.3M659.5 365.4V369.4M661.5 365.7V368.7M664.5 364.2V369.1M665.5 364.5V368.9M667.5 366.0V369.5M671.5 275.0V278.9M673.5 273.9V278.6M676.5 274.2V279.3M678.5 275.4V278.9M679.5 274.2V278.6M683.5 275.4V278.6M684.5 275.1V278.3M686.5 274.4V278.4M687.5 275.3V278.8M690.5 274.6V279.1M692.5 274.0V279.4M693.5 274.2V279.4M696.5 275.7V279.3M699.5 276.0V278.0M702.5 274.6V278.4M704.5 275.7V278.4M707.5 275.2V278.2M710.5 274.3V278.3M714.5 274.7V279.3M716.5 274.0V279.3M720.5 275.6V279.1M722.5 274.4V278.7M725.5 274.8V278.4M727.5 275.7V278.8M729.5 275.0V278.2M731.5 274.9V278.9M734.5 276.0V279.3M736.5 274.8V279.1M740.5 275.2V278.7M743.5 275.8V279.0M746.5 275.9V279.0M749.5 274.0V278.5M752.5 274.9V278.8M756.5 275.9V279.1M758.5 275.3V279.4M760.5 275.0V278.8M764.5 275.5V278.7M766.5 274.8V279.3M768.5 274.2V278.6M770.5 275.4V278.8M774.5 274.6V279.3M776.5 275.3V278.5M778.5 274.6V279.3M779.5 274.4V279.4M782.5 275.9V278.5M783.5 275.6V279.5M786.5 274.6V279.3M789.5 274.7V279.0M792.5 274.5V279.0M795.5 275.5V279.1M797.5 274.3V278.2M799.5 275.9V279.2M802.5 274.6V278.6M805.5 274.3V278.9M807.5 275.3V278.7M809.5 275.1V279.0M813.5 275.9V278.9M814.5 275.7V279.3M816.5 274.0V278.7M818.5 275.1V278.9M821.5 273.8V278.8M823.5 275.8V279.0M826.5 366.3V368.3M828.5 366.0V369.8M830.5 364.4V368.5M831.5 364.7V368.7M834.5 365.9V368.4M837.5 364.7V369.7M840.5 366.1V369.3M843.5 365.3V369.8M845.5 364.2V369.4M846.5 366.3V369.3M849.5 366.1V368.8M852.5 365.9V369.7M855.5 366.2V368.9M857.5 365.3V369.4M859.5 364.5V368.9M861.5 364.9V369.0M864.5 364.6V369.8M867.5 365.1V368.8M868.5 364.2V369.4M871.5 365.6V369.3M875.5 364.5V369.3M877.5 365.4V369.7M879.5 364.8V369.3M882.5 364.5V368.8M883.5 365.7V369.0M886.5 364.5V369.7M888.5 274.2V279.4M891.5 275.4V279.4M894.5 274.5V279.5M896.5 275.8V278.9M899.5 275.6V279.2M903.5 275.5V279.0M905.5 275.0V278.3M907.5 274.3V279.3M910.5 275.8V279.3M913.5 275.5V278.9M916.5 274.1V278.8M919.5 365.9V368.6M921.5 364.8V368.9M923.5 365.4V369.1M925.5 366.2V369.9M927.5 366.1V369.3M930.5 366.0V369.3M932.5 365.2V368.3M933.5 364.1V369.7M936.5 365.1V368.7M939.5 365.4V369.8M942.5 364.5V369.8M944.5 366.2V368.6M945.5 366.1V368.4M948.5 364.4V369.0M951.5 364.3V368.4M954.5 365.4V368.5M957.5 365.7V369.2M960.5 364.2V369.4M962.5 365.3V368.6M966.5 364.1V368.7M967.5 365.7V368.9M970.5 364.3V369.6M972.5 364.6V369.4M975.5 364.1V368.4M976.5 364.6V369.8M979.5 365.6V369.2M981.5 275.3V278.4M982.5 274.9V278.3M984.5 275.7V279.1M985.5 274.4V278.3M986.5 274.0V278.4M990.5 274.1V279.4M991.5 275.0V278.2M996.5 364.9V369.0M998.5 364.5V369.1M1001.5 366.0V368.7M1002.5 364.7V369.2M1004.5 364.4V368.7M1006.5 366.0V368.7M1009.5 365.6V368.6M1012.5 365.6V369.7M1013.5 364.1V368.4M1017.5 364.8V368.6M1019.5 365.7V368.7M1021.5 365.5V369.9M1024.5 364.3V368.5M1026.5 364.3V368.4M1029.5 365.7V369.9M1030.5 364.5V368.8M1032.5 366.3V369.6M1034.5 365.9V369.0M1038.5 365.8V369.2M1039.5 365.9V369.5M1042.5 275.8V278.1M1044.5 274.9V278.4M1046.5 274.7V279.1M1049.5 274.7V278.3M1051.5 274.4V278.7M1053.5 275.9V279.3M1055.5 274.1V279.4M1058.5 276.0V279.5M1060.5 274.1V278.4M1062.5 274.2V278.6M1063.5 275.2V279.0M1065.5 274.9V278.7M1067.5 275.7V279.1" stroke="#1cb0c0" stroke-width="0.7" fill="none" /><path d="M329.5 367.3H359.5M359.5 277.0H377.5M377.5 367.3H423.5M423.5 277.0H454.5M454.5 367.3H515.5M515.5 277.0H609.5M609.5 367.3H670.5M670.5 277.0H825.5M825.5 367.3H887.5M887.5 277.0H918.5M918.5 367.3H980.5M980.5 277.0H995.5M995.5 367.3H1041.5M1041.5 277.0H1069.5" stroke="#28c4d4" stroke-width="2.0" fill="none" /><path d="M577 45H820" stroke="#a8a8a8" stroke-width="1.6"/><path d="M580 39.5H576.5V49.5H580M817 39.5H820.5V49.5H817" stroke="#d0d0d0" stroke-width="1.2" fill="none"/><path d="M670.2 36H678.2L674.2 39Z" fill="#f08c28"/><path d="M670.5 43.2H677.8V50.5H675.6L674.2 52.5L672.8 50.5H670.5Z" fill="#111" stroke="#e88a20" stroke-width="1.1"/><path d="M672.3 45.3H676M674.2 45.3V49.5" stroke="#d8d8d8" stroke-width="1"/><path d="M356 511.7H407.5M654.7 511.7H685.8M932.8 511.7H1069" stroke="#ff28ff" stroke-width="2"/><path d="M407.5 511.7L410.8 503H651.7L654.7 511.7L651.7 520.5H410.8Z" stroke="#b8a800" stroke-width="1.1" fill="#000"/><path d="M685.8 511.7L688.3 503H929.3L932.8 511.7L929.3 520.5H688.3Z" stroke="#18a8b8" stroke-width="1.1" fill="#000"/><path d="M980.5 503V521" stroke="#e01818" stroke-width="1"/><path d="M995.5 503V521" stroke="#20d020" stroke-width="1"/><path d="M330.8 505.5Q330.8 502.8 333.5 502.8H349L356.3 511.7L349 520.8H333.5Q330.8 520.8 330.8 518Z" fill="#c89af0"/><path d="M356.3 511.7H366.3" stroke="#ff28ff" stroke-width="2"/><rect x="366.5" y="505.5" width="28" height="13" rx="2" fill="#262626" stroke="#4a4a4a" stroke-width="1"/><path d="M367 511.7H394" stroke="#ff28ff" stroke-width="2" opacity="0.45"/><path d="M376 511.7H385M380.5 507V516.5" stroke="#8a8a8a" stroke-width="1.2"/><path d="M377.5 503V521" stroke="#18a018" stroke-width="0.8"/><path d="M394.7 511.7H407.5" stroke="#ff28ff" stroke-width="2"/><path d="M349 471.5L358.5 488.3H339.5Z" fill="#e0202a" stroke="#2a2a6a" stroke-width="1.2" stroke-linejoin="round"/><path d="M349 476.5V483.3M349 485V486.6" stroke="#fff" stroke-width="1.6"/><path d="M618.7 421.5H630.2V433H627L624.5 437.5L622 433H618.7Z" fill="#000" stroke="#e88a20" stroke-width="1.4"/><path d="M621.5 424.5H627.5M624.5 424.5V431" stroke="#e88a20" stroke-width="1.3"/><path d="M617.8 54H631L624.4 60.5Z" fill="#f08c28"/><path d="M1039 59H1065V84.5Z" fill="#5c5c5c"/><circle cx="1059" cy="64" r="3.2" stroke="#c8c8c8" stroke-width="1.3" fill="none"/><path d="M1056.8 66.3L1052 71" stroke="#c8c8c8" stroke-width="1.6"/><path d="M334 141H378.5L381.2 150L378.5 159H334Q331 159 331 156V144Q331 141 334 141Z" fill="#201e0a" stroke="#ece418" stroke-width="1.6"/><path d="M350 141V159" stroke="#ece418" stroke-width="1.6"/><path d="M392.8 148.5L402 141.5H427.5V154.5H402Z" fill="none" stroke="#d87820" stroke-width="1"/><path d="M333 357.5H348.5L356.5 367.4L348.5 376.5H333Q330.2 376.5 330.2 373.5V360.5Q330.2 357.5 333 357.5Z" fill="#061818" stroke="#20b8c0" stroke-width="1.3"/></svg>
<div class="t" style="left:334.25px;top:144.60px;font-size:9.1px;line-height:9.1px;color:#ece418;transform:scaleX(0.777);transform-origin:0 0;">C 1</div>
<div class="t" style="left:353.75px;top:144.60px;font-size:9.1px;line-height:9.1px;color:#ece418;transform:scaleX(0.894);transform-origin:0 0;">2.38 V</div>
<div class="t" style="left:402.50px;top:142.72px;font-size:9.9px;line-height:9.9px;color:#e08020;transform:scaleX(0.941);transform-origin:0 0;">50 %</div>
<div class="t" style="left:337.80px;top:362.80px;font-size:9.1px;line-height:9.1px;color:#20c0c8;transform:scaleX(0.806);transform-origin:0 0;">C 2</div>
<div class="t" style="right:134.0999999999999px;top:76.8px;font-size:9.4px;line-height:13px;color:#e8dc20;letter-spacing:0.1px;">6 V</div>
<div class="t" style="right:134.0999999999999px;top:250.9px;font-size:9.4px;line-height:13px;color:#20b8c8;letter-spacing:0.1px;">6 V</div>
<div class="t" style="right:134.0999999999999px;top:95.1px;font-size:9.4px;line-height:13px;color:#e8dc20;letter-spacing:0.1px;">5 V</div>
<div class="t" style="right:134.0999999999999px;top:269.1px;font-size:9.4px;line-height:13px;color:#20b8c8;letter-spacing:0.1px;">5 V</div>
<div class="t" style="right:134.0999999999999px;top:113.4px;font-size:9.4px;line-height:13px;color:#e8dc20;letter-spacing:0.1px;">4 V</div>
<div class="t" style="right:134.0999999999999px;top:287.3px;font-size:9.4px;line-height:13px;color:#20b8c8;letter-spacing:0.1px;">4 V</div>
<div class="t" style="right:134.0999999999999px;top:131.7px;font-size:9.4px;line-height:13px;color:#e8dc20;letter-spacing:0.1px;">3 V</div>
<div class="t" style="right:134.0999999999999px;top:305.5px;font-size:9.4px;line-height:13px;color:#20b8c8;letter-spacing:0.1px;">3 V</div>
<div class="t" style="right:134.0999999999999px;top:150.0px;font-size:9.4px;line-height:13px;color:#e8dc20;letter-spacing:0.1px;">2 V</div>
<div class="t" style="right:134.0999999999999px;top:323.7px;font-size:9.4px;line-height:13px;color:#20b8c8;letter-spacing:0.1px;">2 V</div>
<div class="t" style="right:134.0999999999999px;top:168.3px;font-size:9.4px;line-height:13px;color:#e8dc20;letter-spacing:0.1px;">1 V</div>
<div class="t" style="right:134.0999999999999px;top:341.9px;font-size:9.4px;line-height:13px;color:#20b8c8;letter-spacing:0.1px;">1 V</div>
<div class="t" style="right:134.0999999999999px;top:186.6px;font-size:9.4px;line-height:13px;color:#e8dc20;letter-spacing:0.1px;">0 V</div>
<div class="t" style="right:134.0999999999999px;top:360.1px;font-size:9.4px;line-height:13px;color:#20b8c8;letter-spacing:0.1px;">0 V</div>
<div class="t" style="right:134.0999999999999px;top:204.9px;font-size:9.4px;line-height:13px;color:#e8dc20;letter-spacing:0.1px;">-1 V</div>
<div class="t" style="right:134.0999999999999px;top:378.3px;font-size:9.4px;line-height:13px;color:#20b8c8;letter-spacing:0.1px;">-1 V</div>
<div class="t" style="right:134.0999999999999px;top:223.2px;font-size:9.4px;line-height:13px;color:#e8dc20;letter-spacing:0.1px;">-2 V</div>
<div class="t" style="right:134.0999999999999px;top:396.5px;font-size:9.4px;line-height:13px;color:#20b8c8;letter-spacing:0.1px;">-2 V</div>
<div class="t" style="left:359.00px;top:494.41px;font-size:10.5px;line-height:10.5px;color:#b890f0;transform:scaleX(1.041);transform-origin:0 0;">I2C</div>
<div class="t" style="left:338.20px;top:506.24px;font-size:10px;line-height:10px;color:#1a1a2a;transform:scaleX(0.824);transform-origin:0 0;">B1</div>
<div class="t" style="left:463.30px;top:503.41px;font-size:17px;line-height:17px;color:#ffffff;transform:scaleX(1.114);transform-origin:0 0;font-weight:bold;">Addr:27h:Write</div>
<div class="t" style="left:769.60px;top:503.41px;font-size:17px;line-height:17px;color:#ffffff;transform:scaleX(1.090);transform-origin:0 0;font-weight:bold;">Data:F9h</div>
<div class="t" style="left:383.50px;top:590.83px;font-size:10px;line-height:10px;color:#c4c4c4;letter-spacing:-0.17px;">-14.4 ms</div>
<div class="t" style="left:459.30px;top:590.83px;font-size:10px;line-height:10px;color:#c4c4c4;letter-spacing:0.01px;">-9.6 ms</div>
<div class="t" style="left:533.30px;top:590.83px;font-size:10px;line-height:10px;color:#c4c4c4;letter-spacing:-0.11px;">-4.8 ms</div>
<div class="t" style="left:618.70px;top:590.83px;font-size:10px;line-height:10px;color:#c4c4c4;transform:scaleX(0.899);transform-origin:0 0;">0 s</div>
<div class="t" style="left:684.00px;top:590.83px;font-size:10px;line-height:10px;color:#c4c4c4;letter-spacing:-0.14px;">4.8 ms</div>
<div class="t" style="left:757.70px;top:590.83px;font-size:10px;line-height:10px;color:#c4c4c4;letter-spacing:-0.08px;">9.6 ms</div>
<div class="t" style="left:829.00px;top:590.83px;font-size:10px;line-height:10px;color:#c4c4c4;letter-spacing:-0.09px;">14.4 ms</div>
<div class="t" style="left:903.30px;top:590.83px;font-size:10px;line-height:10px;color:#c4c4c4;letter-spacing:-0.09px;">19.2 ms</div>
<div class="t" style="left:981.70px;top:590.83px;font-size:10px;line-height:10px;color:#c4c4c4;letter-spacing:-0.16px;">24 ms</div>
<div class="r" style="left:1080.5px;top:32.5px;width:1px;height:573px;background:#404040;"></div>
<div class="r" style="left:1081px;top:32px;width:113px;height:1px;background:#5a5550;"></div>
<div class="r" style="left:1069px;top:33px;width:2.2px;height:572.5px;background:#8e8e8e;"></div>
<div class="r" style="left:1074.8px;top:312.1px;width:2.8px;height:2.8px;border-radius:50%;background:#e0e0e0;"></div>
<div class="t" style="left:1116.2px;top:0.5px;font-size:18.5px;line-height:18.5px;color:#fff;font-weight:bold;transform:scaleX(0.905);transform-origin:0 0;letter-spacing:-0.2px;">Tektronix</div>
<svg class="r" style="left:1130.5px;top:4.6px" width="16" height="14"><path d="M4.5 11.8L8 11.8L13.6 2.2L10.1 2.2Z" fill="#1ab4e0"/></svg>
<div class="t" style="left:1107.00px;top:34.11px;font-size:11.8px;line-height:11.8px;color:#e8e8e8;font-weight:bold;letter-spacing:0.18px;">Add New...</div>
<div class="r" style="left:1087px;top:51px;width:48px;height:28.5px;box-sizing:border-box;border:1px solid #514a44;border-radius:5px;background:linear-gradient(#353535,#2b2b2b 20%,#282828 80%,#1f1f1f);"></div>
<div class="r" style="left:1141px;top:51px;width:48px;height:28.5px;box-sizing:border-box;border:1px solid #514a44;border-radius:5px;background:linear-gradient(#353535,#2b2b2b 20%,#282828 80%,#1f1f1f);"></div>
<div class="r" style="left:1087px;top:86px;width:48px;height:28px;box-sizing:border-box;border:1px solid #514a44;border-radius:5px;background:linear-gradient(#353535,#2b2b2b 20%,#282828 80%,#1f1f1f);"></div>
<div class="r" style="left:1141px;top:86px;width:48px;height:28px;box-sizing:border-box;border:1px solid #514a44;border-radius:5px;background:linear-gradient(#353535,#2b2b2b 20%,#282828 80%,#1f1f1f);"></div>
<div class="r" style="left:1087px;top:120.4px;width:48px;height:28.299999999999983px;box-sizing:border-box;border:1px solid #514a44;border-radius:5px;background:linear-gradient(#353535,#2b2b2b 20%,#282828 80%,#1f1f1f);"></div>
<div class="r" style="left:1141px;top:120.4px;width:48px;height:28.299999999999983px;box-sizing:border-box;border:1px solid #514a44;border-radius:5px;background:linear-gradient(#353535,#2b2b2b 20%,#282828 80%,#1f1f1f);"></div>
<div class="r" style="left:1087px;top:158.4px;width:48px;height:28.099999999999994px;box-sizing:border-box;border:1px solid #514a44;border-radius:5px;background:linear-gradient(#353535,#2b2b2b 20%,#282828 80%,#1f1f1f);"></div>
<div class="r" style="left:1141px;top:158.4px;width:48px;height:28.099999999999994px;box-sizing:border-box;border:1px solid #514a44;border-radius:5px;background:linear-gradient(#353535,#2b2b2b 20%,#282828 80%,#1f1f1f);"></div>
<div class="t" style="left:1091.60px;top:58.48px;font-size:11.6px;line-height:11.6px;color:#e6e6e6;transform:scaleX(0.926);transform-origin:0 0;-webkit-text-stroke:0.25px #e6e6e6;">Cursors</div>
<div class="t" style="left:1146.20px;top:58.48px;font-size:11.6px;line-height:11.6px;color:#e6e6e6;letter-spacing:0.11px;-webkit-text-stroke:0.25px #e6e6e6;">Callout</div>
<div class="t" style="left:1088.30px;top:93.48px;font-size:11.6px;line-height:11.6px;color:#e6e6e6;letter-spacing:-0.14px;-webkit-text-stroke:0.25px #e6e6e6;">Measure</div>
<div class="t" style="left:1147.90px;top:93.48px;font-size:11.6px;line-height:11.6px;color:#e6e6e6;transform:scaleX(0.914);transform-origin:0 0;-webkit-text-stroke:0.25px #e6e6e6;">Search</div>
<div class="t" style="left:1092.50px;top:121.88px;font-size:11.6px;line-height:11.6px;color:#e6e6e6;transform:scaleX(0.925);transform-origin:0 0;-webkit-text-stroke:0.25px #e6e6e6;">Results</div>
<div class="t" style="left:1097.70px;top:133.88px;font-size:11.6px;line-height:11.6px;color:#e6e6e6;transform:scaleX(0.949);transform-origin:0 0;-webkit-text-stroke:0.25px #e6e6e6;">Table</div>
<div class="t" style="left:1154.70px;top:127.88px;font-size:11.6px;line-height:11.6px;color:#e6e6e6;-webkit-text-stroke:0.25px #e6e6e6;">Plot</div>
<div class="t" style="left:1146.50px;top:166.78px;font-size:11.6px;line-height:11.6px;color:#e6e6e6;letter-spacing:0.1px;-webkit-text-stroke:0.25px #e6e6e6;">More...</div>
<div class="r" style="left:1084px;top:153.2px;width:108px;height:1px;background:#4a4540;"></div>
<div class="r" style="left:1084px;top:192px;width:108px;height:1px;background:#4a4540;"></div>
<svg class="r" style="left:1098px;top:160px" width="26" height="24"><path d="M4.5 5.5H19.5M4.5 5.5V9M19.5 5.5V12" stroke="#c8c8c8" stroke-width="1.3" stroke-dasharray="2.2 1.6" fill="none"/><circle cx="13.5" cy="11" r="3.3" stroke="#c8c8c8" stroke-width="1.2" fill="none"/><path d="M15 17.5L17 19M18.5 18L20 19.5" stroke="#c8c8c8" stroke-width="1.2"/></svg>
<div class="r" style="left:1084.2px;top:201.4px;width:107px;height:40.69999999999999px;border-radius:3px;overflow:hidden;background:#c9c9c9;"><div style="position:absolute;left:0;top:0;width:107px;height:13.400000000000006px;background:#5a5a5a;"></div></div>
<div class="r" style="left:1172.6px;top:204.4px;width:14.5px;height:8.2px;border-radius:4.5px;background:#f0e028;"></div>
<div class="t" style="left:1177.80px;top:205.95px;font-size:7.5px;line-height:7.5px;color:#222;">1</div>
<div class="t" style="left:1087.90px;top:201.62px;font-size:11.2px;line-height:11.2px;color:#e8e8e8;transform:scaleX(0.953);transform-origin:0 0;">Meas 1</div>
<div class="t" style="left:1087.60px;top:216.96px;font-size:10.8px;line-height:10.8px;color:#111;transform:scaleX(0.948);transform-origin:0 0;">Frequency</div>
<div class="t" style="left:1087.60px;top:230.46px;font-size:10.8px;line-height:10.8px;color:#111;letter-spacing:0.13px;">μ': 474.9 Hz</div>
<div class="r" style="left:1084.2px;top:249.4px;width:107px;height:39.900000000000006px;border-radius:3px;overflow:hidden;background:#c9c9c9;"><div style="position:absolute;left:0;top:0;width:107px;height:12.299999999999983px;background:#000000;"></div></div>
<div class="r" style="left:1172.6px;top:252.4px;width:14.5px;height:8.2px;border-radius:4.5px;background:#f0e028;"></div>
<div class="t" style="left:1177.80px;top:253.95px;font-size:7.5px;line-height:7.5px;color:#222;">1</div>
<div class="t" style="left:1087.90px;top:249.22px;font-size:11.2px;line-height:11.2px;color:#f0e028;letter-spacing:-0.19px;">Meas 2</div>
<div class="t" style="left:1087.60px;top:263.36px;font-size:10.8px;line-height:10.8px;color:#111;transform:scaleX(0.948);transform-origin:0 0;">Period</div>
<div class="t" style="left:1087.60px;top:277.16px;font-size:10.8px;line-height:10.8px;color:#111;letter-spacing:0.14px;">μ': 2.200 ms</div>
<div class="r" style="left:9px;top:612px;width:66.7px;height:55px;border-radius:3px;overflow:hidden;background:#c9c9c9;"><div style="position:absolute;left:0;top:0;width:100%;height:13.5px;background:#4b4620;"></div></div>
<div class="t" style="left:13.00px;top:613.17px;font-size:11.5px;line-height:11.5px;color:#f0e030;transform:scaleX(0.886);transform-origin:0 0;">Ch 1</div>
<div class="t" style="left:13.00px;top:627.79px;font-size:11px;line-height:11px;color:#111;letter-spacing:-0.17px;">1 V/div</div>
<div class="t" style="left:13.00px;top:655.19px;font-size:11px;line-height:11px;color:#111;letter-spacing:0.02px;">200 MHz</div>
<div class="r" style="left:80px;top:612px;width:67.5px;height:55px;border-radius:3px;overflow:hidden;background:#c9c9c9;"><div style="position:absolute;left:0;top:0;width:100%;height:13.5px;background:#1e4244;"></div></div>
<div class="t" style="left:84.00px;top:613.17px;font-size:11.5px;line-height:11.5px;color:#28c8d0;transform:scaleX(0.919);transform-origin:0 0;">Ch 2</div>
<div class="t" style="left:84.00px;top:627.79px;font-size:11px;line-height:11px;color:#111;letter-spacing:-0.12px;">1 V/div</div>
<div class="t" style="left:84.00px;top:655.19px;font-size:11px;line-height:11px;color:#111;">200 MHz</div>
<div class="r" style="left:151.3px;top:612px;width:67.5px;height:55px;border-radius:3px;overflow:hidden;background:#c9c9c9;"><div style="position:absolute;left:0;top:0;width:100%;height:13.5px;background:#a070b0;"></div></div>
<div class="t" style="left:155.30px;top:613.17px;font-size:11.5px;line-height:11.5px;color:#111;transform:scaleX(0.875);transform-origin:0 0;">Bus 1</div>
<div class="t" style="left:155.30px;top:627.79px;font-size:11px;line-height:11px;color:#111;transform:scaleX(0.865);transform-origin:0 0;">I2C</div>
<svg class="r" style="left:12.8px;top:641px" width="13" height="11"><path d="M1.8 4.8Q2.5 1.2 5.7 1.2Q8.8 1.2 9.8 5.5" stroke="#222" stroke-width="1.1" fill="none"/><circle cx="5.7" cy="3.3" r="1.7" stroke="#222" stroke-width="1.1" fill="none"/><rect x="0.6" y="4.8" width="2.4" height="3.8" rx="1.1" stroke="#444" stroke-width="0.9" fill="none"/><rect x="8.5" y="5.6" width="3" height="3.8" rx="0.5" stroke="#333" stroke-width="0.9" fill="none"/></svg>
<svg class="r" style="left:84.1px;top:641px" width="13" height="11"><path d="M1.8 4.8Q2.5 1.2 5.7 1.2Q8.8 1.2 9.8 5.5" stroke="#222" stroke-width="1.1" fill="none"/><circle cx="5.7" cy="3.3" r="1.7" stroke="#222" stroke-width="1.1" fill="none"/><rect x="0.6" y="4.8" width="2.4" height="3.8" rx="1.1" stroke="#444" stroke-width="0.9" fill="none"/><rect x="8.5" y="5.6" width="3" height="3.8" rx="0.5" stroke="#333" stroke-width="0.9" fill="none"/></svg>
<div class="r" style="left:437.5px;top:608px;width:30.0px;height:59.5px;box-sizing:border-box;border:1px solid #514a44;border-radius:5px;background:linear-gradient(#303030,#2a2a2a 15%,#282828 85%,#1e1e1e);"></div>
<div class="r" style="left:440.5px;top:614.2px;width:24.0px;height:1.8px;background:#e03858;border-radius:1px;"></div>
<div class="r" style="left:471.3px;top:608px;width:29.5px;height:59.5px;box-sizing:border-box;border:1px solid #514a44;border-radius:5px;background:linear-gradient(#303030,#2a2a2a 15%,#282828 85%,#1e1e1e);"></div>
<div class="r" style="left:474.3px;top:614.2px;width:23.5px;height:1.8px;background:#88d030;border-radius:1px;"></div>
<div class="r" style="left:517px;top:608px;width:29.700000000000045px;height:59.5px;box-sizing:border-box;border:1px solid #514a44;border-radius:5px;background:linear-gradient(#303030,#2a2a2a 15%,#282828 85%,#1e1e1e);"></div>
<div class="r" style="left:520px;top:614.2px;width:23.700000000000045px;height:1.8px;background:#e88a28;border-radius:1px;"></div>
<div class="r" style="left:550.8px;top:608px;width:29.700000000000045px;height:59.5px;box-sizing:border-box;border:1px solid #514a44;border-radius:5px;background:linear-gradient(#303030,#2a2a2a 15%,#282828 85%,#1e1e1e);"></div>
<div class="r" style="left:553.8px;top:614.2px;width:23.700000000000045px;height:1.8px;background:#c0c0cc;border-radius:1px;"></div>
<div class="r" style="left:584.2px;top:608px;width:30.0px;height:59.5px;box-sizing:border-box;border:1px solid #514a44;border-radius:5px;background:linear-gradient(#303030,#2a2a2a 15%,#282828 85%,#1e1e1e);"></div>
<div class="r" style="left:587.2px;top:614.2px;width:24.0px;height:1.8px;background:#b858e8;border-radius:1px;"></div>
<div class="r" style="left:630.3px;top:608px;width:29.700000000000045px;height:59.5px;box-sizing:border-box;border:1px solid #514a44;border-radius:5px;background:linear-gradient(#303030,#2a2a2a 15%,#282828 85%,#1e1e1e);"></div>
<div class="r" style="left:633.3px;top:614.2px;width:23.700000000000045px;height:1.8px;background:#484848;border-radius:1px;"></div>
<div class="r" style="left:667.8px;top:608px;width:29.600000000000023px;height:59.5px;box-sizing:border-box;border:1px solid #514a44;border-radius:5px;background:linear-gradient(#303030,#2a2a2a 15%,#282828 85%,#1e1e1e);"></div>
<div class="r" style="left:670.8px;top:614.2px;width:23.600000000000023px;height:1.8px;background:#484848;border-radius:1px;"></div>
<div class="r" style="left:509.5px;top:609px;width:1px;height:58px;background:#56514b;"></div>
<div class="r" style="left:622.5px;top:609px;width:1px;height:58px;background:#56514b;"></div>
<div class="r" style="left:705.5px;top:609px;width:1px;height:58px;background:#56514b;"></div>
<div class="r" style="left:1111.5px;top:609px;width:1px;height:58px;background:#56514b;"></div>
<div class="t" style="left:448.70px;top:632.81px;font-size:15.7px;line-height:15.7px;color:#e6e6e6;">3</div>
<div class="t" style="left:482.00px;top:632.81px;font-size:15.7px;line-height:15.7px;color:#e6e6e6;">4</div>
<div class="t" style="left:511.79999999999995px;width:40px;text-align:center;top:622.6px;font-size:11.3px;line-height:11.3px;color:#e6e6e6;">Add</div>
<div class="t" style="left:511.79999999999995px;width:40px;text-align:center;top:634.2px;font-size:11.3px;line-height:11.3px;color:#e6e6e6;">New</div>
<div class="t" style="left:511.79999999999995px;width:40px;text-align:center;top:645.9px;font-size:11.3px;line-height:11.3px;color:#e6e6e6;">Math</div>
<div class="t" style="left:545.6px;width:40px;text-align:center;top:622.6px;font-size:11.3px;line-height:11.3px;color:#e6e6e6;">Add</div>
<div class="t" style="left:545.6px;width:40px;text-align:center;top:634.2px;font-size:11.3px;line-height:11.3px;color:#e6e6e6;">New</div>
<div class="t" style="left:545.6px;width:40px;text-align:center;top:645.9px;font-size:11.3px;line-height:11.3px;color:#e6e6e6;">Ref</div>
<div class="t" style="left:579.2px;width:40px;text-align:center;top:622.6px;font-size:11.3px;line-height:11.3px;color:#e6e6e6;">Add</div>
<div class="t" style="left:579.2px;width:40px;text-align:center;top:634.2px;font-size:11.3px;line-height:11.3px;color:#e6e6e6;">New</div>
<div class="t" style="left:579.2px;width:40px;text-align:center;top:645.9px;font-size:11.3px;line-height:11.3px;color:#e6e6e6;">Bus</div>
<div class="t" style="left:633.30px;top:634.51px;font-size:11.8px;line-height:11.8px;color:#e6e6e6;transform:scaleX(0.878);transform-origin:0 0;">DVM</div>
<div class="t" style="left:672.20px;top:634.51px;font-size:11.8px;line-height:11.8px;color:#e6e6e6;transform:scaleX(0.825);transform-origin:0 0;">AFG</div>
<div class="r" style="left:714px;top:612.8px;width:148.20000000000005px;height:54px;border-radius:3px;overflow:hidden;background:#c9c9c9;"><div style="position:absolute;left:0;top:0;width:100%;height:14.2px;background:#5a5a5a;"></div></div>
<div class="t" style="left:718.00px;top:613.47px;font-size:11.5px;line-height:11.5px;color:#f0f0f0;letter-spacing:0.29px;-webkit-text-stroke:0.3px #f0f0f0;">Horizontal</div>
<div class="r" style="left:867.7px;top:612.8px;width:118.29999999999995px;height:54px;border-radius:3px;overflow:hidden;background:#c9c9c9;"><div style="position:absolute;left:0;top:0;width:100%;height:14.2px;background:#5a5a5a;"></div></div>
<div class="t" style="left:871.70px;top:613.47px;font-size:11.5px;line-height:11.5px;color:#f0f0f0;letter-spacing:0.03px;-webkit-text-stroke:0.3px #f0f0f0;">Trigger</div>
<div class="r" style="left:991.2px;top:612.8px;width:111.09999999999991px;height:54px;border-radius:3px;overflow:hidden;background:#c9c9c9;"><div style="position:absolute;left:0;top:0;width:100%;height:14.2px;background:#5a5a5a;"></div></div>
<div class="t" style="left:995.20px;top:613.47px;font-size:11.5px;line-height:11.5px;color:#f0f0f0;letter-spacing:0.25px;-webkit-text-stroke:0.3px #f0f0f0;">Acquisition</div>
<div class="t" style="left:717.20px;top:627.69px;font-size:11px;line-height:11px;color:#111;letter-spacing:-0.15px;">4.8 ms/div</div>
<div class="t" style="left:796.00px;top:627.69px;font-size:11px;line-height:11px;color:#111;letter-spacing:-0.19px;">48 ms</div>
<div class="t" style="left:717.20px;top:641.69px;font-size:11px;line-height:11px;color:#111;transform:scaleX(0.899);transform-origin:0 0;">SR: 5 MS/s</div>
<div class="t" style="left:796.00px;top:641.69px;font-size:11px;line-height:11px;color:#111;letter-spacing:0.05px;">200 ns/pt</div>
<div class="t" style="left:717.20px;top:655.19px;font-size:11px;line-height:11px;color:#111;letter-spacing:-0.25px;">RL: 240 kpts</div>
<svg class="r" style="left:795.5px;top:656px" width="9" height="11"><path d="M0.5 0.5H7.5V7.5H5.5L4 10L2.5 7.5H0.5Z" fill="#222" stroke="#e88a20" stroke-width="1"/><path d="M2.3 2.5H5.7M4 2.5V6.5" stroke="#fff" stroke-width="1"/></svg>
<div class="t" style="left:807.20px;top:655.19px;font-size:11px;line-height:11px;color:#111;">40%</div>
<div class="r" style="left:870.8px;top:627px;width:22.2px;height:12.6px;box-sizing:border-box;border:1px solid #5a3a6a;border-radius:3px;background:#a070c0;"></div>
<div class="t" style="left:876.20px;top:627.49px;font-size:11px;line-height:11px;color:#111;transform:scaleX(0.801);transform-origin:0 0;">B1</div>
<div class="t" style="left:900.60px;top:627.49px;font-size:11px;line-height:11px;color:#111;transform:scaleX(0.889);transform-origin:0 0;">I2C</div>
<div class="t" style="left:870.80px;top:641.39px;font-size:11px;line-height:11px;color:#111;transform:scaleX(0.929);transform-origin:0 0;">Address</div>
<div class="t" style="left:994.40px;top:627.99px;font-size:11px;line-height:11px;color:#111;letter-spacing:0.08px;">Auto,</div>
<div class="t" style="left:1055.20px;top:627.99px;font-size:11px;line-height:11px;color:#111;transform:scaleX(0.937);transform-origin:0 0;">Analyze</div>
<div class="t" style="left:994.40px;top:641.99px;font-size:11px;line-height:11px;color:#111;letter-spacing:-0.17px;">Sample: 12 bits</div>
<div class="t" style="left:994.40px;top:655.59px;font-size:11px;line-height:11px;color:#111;letter-spacing:-0.22px;">Single: 1 /1</div>
<div class="r" style="left:1119.8px;top:608px;width:67.2px;height:26.7px;box-sizing:border-box;border:1px solid #5a3030;border-radius:5px;background:#ff1e28;"></div>
<div class="t" style="left:1132.10px;top:615.33px;font-size:10.6px;line-height:10.6px;color:#ffffff;font-weight:bold;letter-spacing:0.13px;">Stopped</div>
<div class="r" style="left:1119.5px;top:639px;width:67.5px;height:27.7px;border-radius:5px;background:#c9c9c9;"></div>
<div class="t" style="left:1122.10px;top:640.81px;font-size:10.5px;line-height:10.5px;color:#111;letter-spacing:0.21px;">28 Nov 2025</div>
<div class="t" style="left:1132.10px;top:653.71px;font-size:10.5px;line-height:10.5px;color:#111;letter-spacing:0.21px;">18:48:58</div>
<div class="r" style="left:1081px;top:605px;width:113px;height:1px;background:#56514b;"></div>
<svg class="r" style="left:0;top:0" width="1200" height="675"><path d="M1108.3 183C1108.0 182.1 1108.2 179.0 1106.5 177.5C1104.8 176.0 1101.4 174.9 1098 174C1094.6 173.1 1090.5 172.9 1086 172.3C1081.5 171.7 1075.5 170.9 1071 170.5C1066.5 170.1 1064.2 168.3 1059.3 169.8C1054.4 171.3 1047.2 176.3 1041.6 179.5C1036.0 182.7 1030.8 185.5 1025.6 188.8C1020.4 192.1 1014.7 196.1 1010.4 199.5C1006.1 202.9 1002.1 206.2 1000 209.5C997.9 212.8 998.4 215.1 998 219C997.6 222.9 997.7 228.5 997.8 233C997.9 237.5 998.0 242.7 998.6 246C999.2 249.3 999.6 250.1 1001.5 253C1003.4 255.9 1006.9 259.5 1010.2 263.3C1013.5 267.1 1017.0 271.7 1021.1 275.8C1025.2 279.9 1029.9 284.1 1035.1 288.2C1040.3 292.3 1047.0 296.7 1052.2 300.5C1057.4 304.3 1061.8 307.8 1066.2 311.2C1070.6 314.6 1073.1 316.9 1078.6 320.8C1084.1 324.7 1093.0 330.3 1099 334.5C1105.0 338.7 1109.7 342.6 1114.8 345.8C1119.9 349.1 1124.7 351.8 1129.6 354C1134.5 356.2 1139.5 357.7 1144.4 359.3C1149.4 360.9 1155.5 362.5 1159.3 363.7C1163.1 364.9 1162.6 366.0 1167 366.5C1171.4 367.0 1181.3 367.4 1185.9 366.7C1190.5 366.0 1192.8 364.3 1194.8 362.2C1196.8 360.1 1197.4 357.8 1197.8 354C1198.2 350.2 1197.2 344.2 1197 339.3C1196.8 334.4 1196.8 329.1 1196.3 324.4C1195.8 319.7 1194.4 316.0 1194 311.1C1193.6 306.2 1194.0 300.0 1193.8 294.8C1193.5 289.6 1193.0 284.5 1192.5 280C1192.0 275.5 1191.6 273.8 1190.6 267.9C1189.6 262.0 1188.3 251.9 1186.7 244.8C1185.1 237.7 1183.5 231.9 1180.9 225.5C1178.3 219.1 1175.2 211.6 1171.3 206.2C1167.4 200.8 1163.3 196.9 1157.8 192.8C1152.3 188.7 1144.6 184.1 1138.5 181.5C1132.4 178.9 1126.6 178.3 1121 177C1115.4 175.7 1111.0 174.3 1105 173.5C1099.0 172.7 1090.8 172.4 1085 172C1079.2 171.6 1072.5 171.2 1070 171" stroke="#0872da" stroke-width="7" fill="none" stroke-linecap="round" stroke-linejoin="round"/><circle cx="1108" cy="182.5" r="4" fill="#0872da"/></svg>
</body></html>
